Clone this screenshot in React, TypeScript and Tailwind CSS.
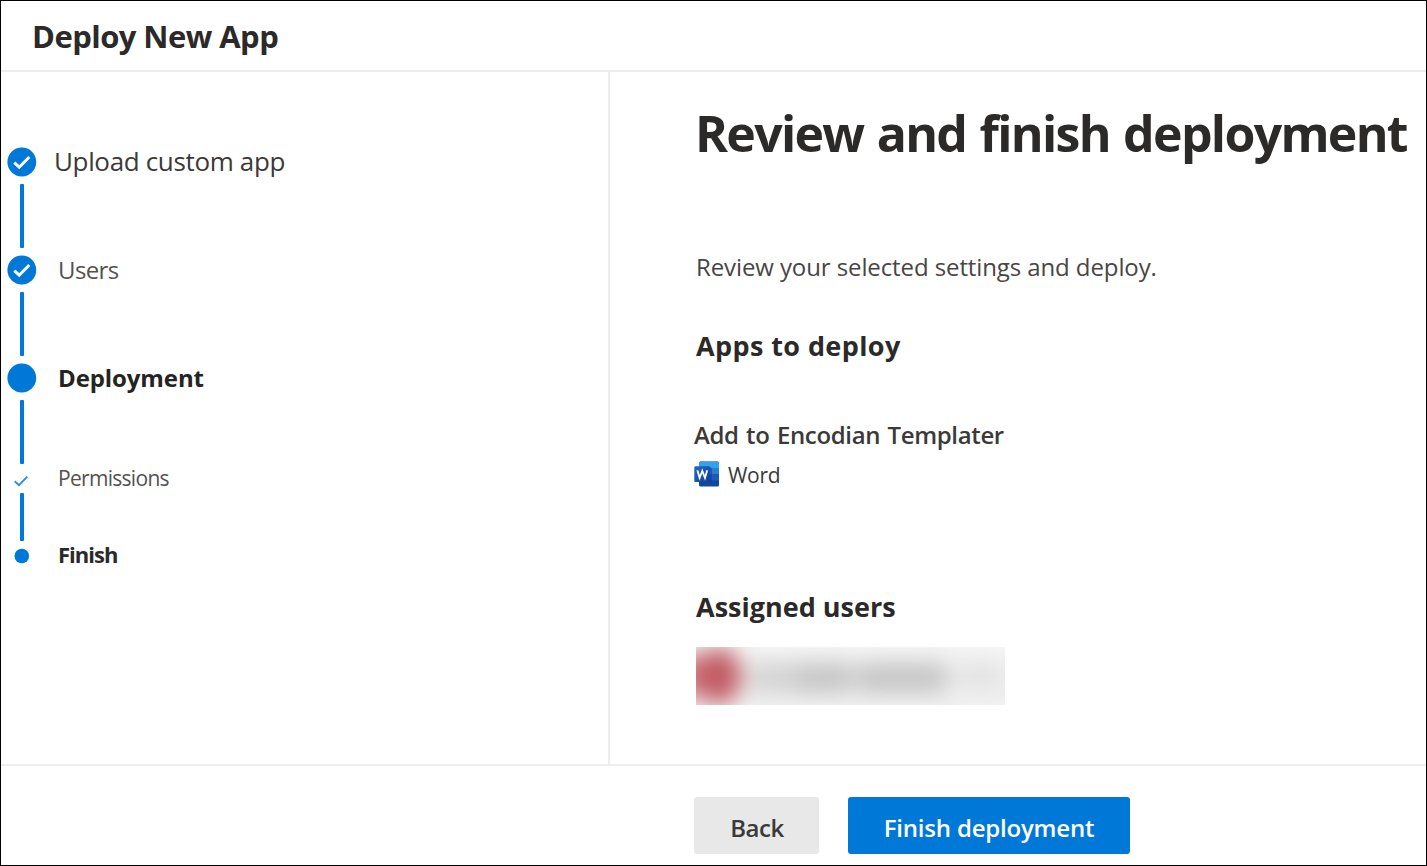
import React from 'react';

type StepStatus = 'done' | 'current' | 'sub-done' | 'sub-current';

interface Step {
    label: string;
    status: StepStatus;
    labelClass: string;
    markerClass: string;
    connectorClass?: string;
}

const steps: Step[] = [
    {
        label: 'Upload custom app',
        status: 'done',
        labelClass: 'pl-[17px] pb-[2px] text-[26px] tracking-[-0.35px] text-[#3b3a39]',
        markerClass: 'h-[30px]',
        connectorClass: 'h-[64px] my-[7px]',
    },
    {
        label: 'Users',
        status: 'done',
        labelClass: 'pl-[21px] text-[24px] tracking-[-0.6px] text-[#54514f]',
        markerClass: 'h-[30px]',
        connectorClass: 'h-[64px] my-[7px]',
    },
    {
        label: 'Deployment',
        status: 'current',
        labelClass: 'pl-[21px] text-[24px] font-bold tracking-[-0.1px] text-[#252423]',
        markerClass: 'h-[30px]',
        connectorClass: 'h-[64px] mt-[7px]',
    },
    {
        label: 'Permissions',
        status: 'sub-done',
        labelClass: 'pl-[21px] pb-[1px] text-[21px] tracking-[-0.7px] text-[#54514f]',
        markerClass: 'h-[29px]',
        connectorClass: 'h-[48px]',
    },
    {
        label: 'Finish',
        status: 'sub-current',
        labelClass: 'pl-[21px] pb-[3px] text-[22px] font-bold tracking-[-1px] text-[#2b2a29]',
        markerClass: 'h-[29px]',
    },
];

const StepMarker: React.FC<{ status: StepStatus }> = ({ status }) => {
    if (status === 'sub-done') {
        return (
            <svg className="w-[30px] h-[29px]" viewBox="0 0 30 29" fill="none">
                <path d="M7.7 17.2 L12 21.2 L20.3 12.6" stroke="#2b8fe0" strokeWidth="1.9" />
            </svg>
        );
    }

    return (
        <svg className="w-[30px] h-[30px]" viewBox="0 0 30 30" fill="none">
            <circle cx="14.8" cy="15" r={status === 'sub-current' ? 7.3 : 14.4} fill="#0078d7" />
            {status === 'done' && <path d="M7.3 15.6 L12.2 20.2 L22.3 10" stroke="#fff" strokeWidth="3" />}
        </svg>
    );
};

const StepItem: React.FC<{ step: Step }> = ({ step }) => (
    <li>
        <div className={`flex items-center ${step.markerClass}`}>
            <StepMarker status={step.status} />
            <span className={`leading-[30px] whitespace-nowrap ${step.labelClass}`}>{step.label}</span>
        </div>
        {step.connectorClass && <div className={`ml-[13px] w-[4px] rounded-[1px] bg-[#0078d7] ${step.connectorClass}`} />}
    </li>
);

const WordIcon: React.FC<{ className?: string }> = ({ className }) => (
    <svg className={className} viewBox="0 0 26 26">
        <defs>
            <linearGradient id="word-tile" x1="0" y1="0" x2="1" y2="1">
                <stop offset="0" stopColor="#2368c4" />
                <stop offset="1" stopColor="#0f3f94" />
            </linearGradient>
        </defs>
        <rect x="5" y="0.5" width="20" height="25" rx="1.5" fill="#1247a0" />
        <path d="M6.5 0.5 H23.5 A1.5 1.5 0 0 1 25 2 V7 H5 V2 A1.5 1.5 0 0 1 6.5 0.5 Z" fill="#35a0ee" />
        <rect x="5" y="7" width="20" height="6.2" fill="#2b7cd3" />
        <rect x="5" y="13.2" width="20" height="6.2" fill="#185abd" />
        <rect x="5" y="6.5" width="13" height="15" rx="1" fill="#0d3a83" opacity="0.45" />
        <rect x="0.3" y="5.3" width="16" height="15.7" rx="1.3" fill="url(#word-tile)" />
        <path d="M3.4 9.3 L5.6 17 L8.3 9.9 L11 17 L13.2 9.3" fill="none" stroke="#fff" strokeWidth="1.8" />
    </svg>
);

// Name and avatar of the assigned user are obscured
const RedactedUser: React.FC = () => (
    <svg className="mt-[22px] w-[309px] h-[58px]" viewBox="0 0 309 58">
        <defs>
            <filter id="redact" x="-50%" y="-100%" width="200%" height="300%" colorInterpolationFilters="sRGB">
                <feGaussianBlur stdDeviation="11" />
            </filter>
            <linearGradient id="redact-bg" x1="0" y1="0" x2="0" y2="1">
                <stop offset="0" stopColor="#f5f5f5" />
                <stop offset="0.5" stopColor="#ececec" />
                <stop offset="1" stopColor="#f1f1f1" />
            </linearGradient>
        </defs>
        <rect width="309" height="58" fill="url(#redact-bg)" />
        <g filter="url(#redact)">
            <rect x="56" y="17" width="50" height="28" fill="#d2d2d2" />
            <rect x="102" y="17" width="54" height="28" fill="#c4c4c4" />
            <rect x="162" y="17" width="88" height="28" fill="#c4c4c4" />
            <rect x="268" y="20" width="30" height="18" fill="#dfdfdf" />
            <rect x="-20" y="8" width="44" height="42" fill="#cf7f85" />
            <ellipse cx="23" cy="29" rx="22" ry="28" fill="#c15a63" />
        </g>
    </svg>
);

const App: React.FC = () => {
    return (
        <div className="flex flex-col w-[1427px] h-[866px] border border-black bg-white overflow-hidden font-['Open_Sans','Noto_Sans',sans-serif]">
            <header className="flex items-center h-[71px] shrink-0 pl-[31px] pt-[1px] border-b-2 border-[#ededed]">
                <h1 className="text-[31px] leading-[40px] font-bold tracking-[-0.55px] text-[#2b2a29]">Deploy New App</h1>
            </header>

            <div className="flex h-[692px] shrink-0">
                <nav className="w-[609px] shrink-0 pl-[6px] pt-[75px] border-r-2 border-[#ededed]">
                    <ol>
                        {steps.map((step) => (
                            <StepItem key={step.label} step={step} />
                        ))}
                    </ol>
                </nav>

                <main className="flex-1 min-w-0 pl-[86px] pt-[31px] whitespace-nowrap text-[#2b2a29]">
                    <h2 className="-ml-[1px] text-[50px] leading-[60px] font-bold tracking-[-1.7px] [word-spacing:2px]">
                        Review and finish deployment
                    </h2>
                    <p className="mt-[88px] text-[24px] leading-[32px] tracking-[-0.1px] text-[#484644]">
                        Review your selected settings and deploy.
                    </p>

                    <h3 className="mt-[45px] text-[27px] leading-[36px] font-bold tracking-[0.4px]">Apps to deploy</h3>
                    <h4 className="-ml-[2px] mt-[55px] text-[24px] leading-[32px] font-semibold tracking-[-0.35px] [word-spacing:1.5px] text-[#3b3a39]">
                        Add to Encodian Templater
                    </h4>
                    <div className="flex items-center h-[28px] mt-[9px] -ml-[2px]">
                        <WordIcon className="w-[26px] h-[26px] mb-[1px]" />
                        <span className="pl-[8px] pt-[2px] text-[21px] leading-[28px] tracking-[-0.3px] text-[#3b3a39]">Word</span>
                    </div>

                    <h3 className="mt-[101px] text-[27px] leading-[36px] font-bold">Assigned users</h3>
                    <RedactedUser />
                </main>
            </div>

            <footer className="flex items-start gap-[29px] flex-1 pl-[693px] pt-[31px] border-t-2 border-[#ededed] text-[24px] font-semibold">
                <button className="w-[125px] h-[57px] rounded-[3px] bg-[#e8e8e8] text-[#3b3a39] tracking-[-0.5px] pt-[5px] pl-[1px]">Back</button>
                <button className="w-[282px] h-[57px] rounded-[3px] bg-[#0078d7] text-white tracking-[-0.2px] pt-[5px]">
                    Finish deployment
                </button>
            </footer>
        </div>
    );
};

export default App;
